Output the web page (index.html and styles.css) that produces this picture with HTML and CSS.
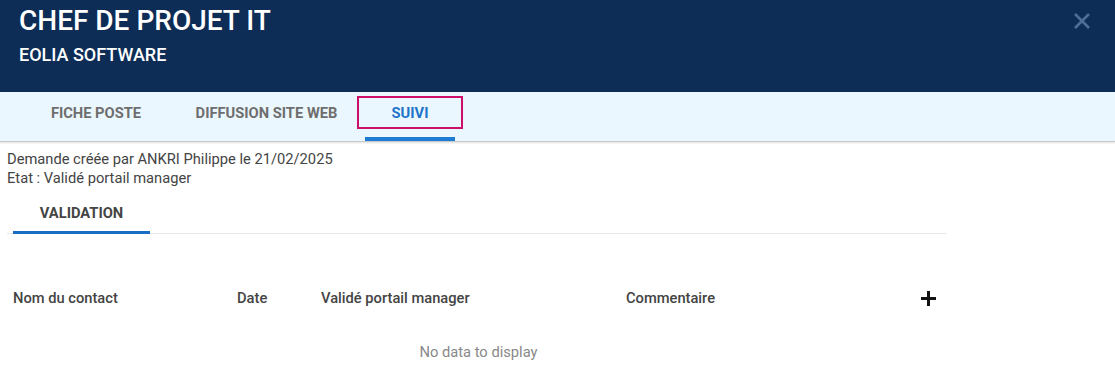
FILE: index.html
```html
<!DOCTYPE html>
<html lang="fr">
<head>
<meta charset="utf-8">
<link rel="stylesheet" href="styles.css">
</head>
<body>
<header class="hdr">
  <div class="hdr-text">
    <h1 class="title">CHEF DE PROJET IT</h1>
    <div class="subtitle">EOLIA SOFTWARE</div>
  </div>
  <button class="close" aria-label="Fermer">
    <svg width="18" height="18" viewBox="0 0 18 18"><path d="M2 2 L16 16 M16 2 L2 16" stroke="#4e6e96" stroke-width="2.6" fill="none"/></svg>
  </button>
</header>
<nav class="tabs">
  <div class="tab tab-1">FICHE POSTE</div>
  <div class="tab tab-2">DIFFUSION SITE WEB</div>
  <div class="tab tab-3 active">SUIVI<span class="highlight"></span></div>
</nav>
<main class="content">
  <div class="info">
    <div>Demande créée par ANKRI Philippe le 21/02/2025</div>
    <div>Etat : Validé portail manager</div>
  </div>
  <div class="subtabs">
    <div class="subtab active">VALIDATION</div>
  </div>
  <div class="table">
    <div class="thead">
      <div class="th">Nom du contact</div>
      <div class="th">Date</div>
      <div class="th">Validé portail manager</div>
      <div class="th">Commentaire</div>
      <div class="th add">
        <svg width="17" height="17" viewBox="0 0 17 17"><path d="M8.5 1 V16 M1 8.5 H16" stroke="#111" stroke-width="3" fill="none"/></svg>
      </div>
    </div>
    <div class="nodata">No data to display</div>
  </div>
</main>
</body>
</html>
```
FILE: styles.css
```css
* { box-sizing: border-box; }
body {
  margin: 0;
  font-family: Roboto, "Liberation Sans", Arial, sans-serif;
  background: #fff;
  color: #444;
}
.hdr {
  height: 92px;
  background: #0d2d56;
  display: flex;
  justify-content: space-between;
  align-items: flex-start;
  padding: 0 24px 0 19px;
}
.hdr-text { padding-top: 4px; }
.title {
  margin: 0;
  font-size: 28px;
  font-weight: 500;
  color: #fff;
  line-height: 34px;
}
.subtitle {
  margin-top: 6px;
  font-size: 18px;
  font-weight: 500;
  color: #fff;
  line-height: 21px;
}
.close {
  margin-top: 12px;
  background: none;
  border: 0;
  padding: 0;
  width: 18px;
  height: 18px;
  cursor: pointer;
}
.tabs {
  height: 50px;
  background: #eaf7fe;
  display: flex;
  padding-left: 24px;
  border-bottom: 1px solid #c9c9c9;
  box-shadow: 0 1px 2px rgba(0,0,0,0.12);
}
.tab {
  position: relative;
  display: flex;
  align-items: center;
  justify-content: center;
  font-size: 14.7px;
  font-weight: 700;
  color: #6e6e6e;
  padding-bottom: 4px;
  border-bottom: 4px solid transparent;
}
.tab-1 { width: 144px; }
.tab-2 { width: 197px; }
.tab-3 { width: 90px; }
.tab.active { color: #1e74c9; border-bottom-color: #1e7bd4; }
.highlight {
  position: absolute;
  left: -8px;
  right: -8px;
  top: 4px;
  height: 33px;
  border: 2px solid #cc0f6a;
}
.content { padding: 8px 7px 0 7px; width: 953px; }
.info {
  font-size: 14.7px;
  line-height: 19px;
  color: #444;
}
.subtabs {
  margin-top: 7px;
  display: flex;
  border-bottom: 1px solid #e6e6e6;
  padding-left: 6px;
}
.subtab {
  width: 137px;
  height: 39px;
  display: flex;
  align-items: center;
  justify-content: center;
  font-size: 14.7px;
  font-weight: 700;
  color: #444;
  margin-bottom: -1px;
  border-bottom: 3px solid transparent;
}
.subtab.active { border-bottom-color: #166dc2; }
.table { padding: 0 6px; }
.thead {
  display: grid;
  grid-template-columns: 224px 84px 305px 1fr 22px;
  align-items: center;
  height: 36px;
  margin-top: 46px;
}
.th {
  font-size: 14.7px;
  font-weight: 500;
  color: #444;
}
.add { display: flex; align-items: center; padding-left: 2px; }
.nodata {
  text-align: center;
  margin-top: 27px;
  padding-left: 4px;
  font-size: 14.7px;
  color: #888;
  line-height: 18px;
}
```
